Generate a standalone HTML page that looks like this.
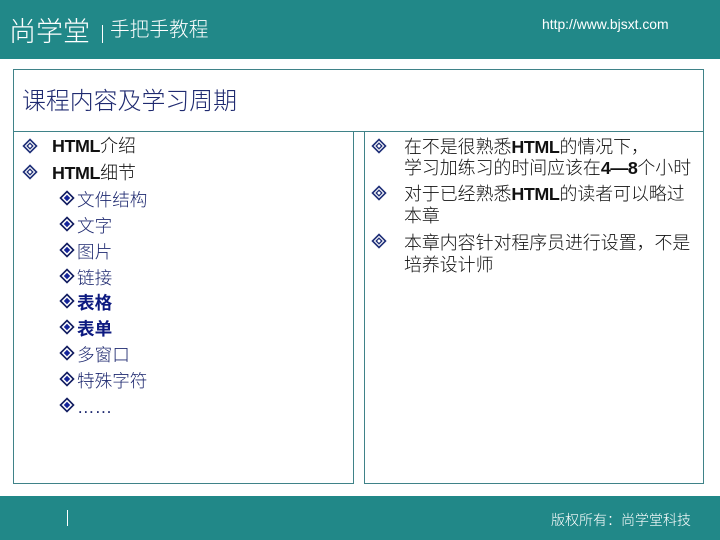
<!DOCTYPE html>
<html lang="zh-CN"><head><meta charset="utf-8">
<style>
html,body{margin:0;padding:0;background:#fff}
#p{position:relative;width:720px;height:540px;overflow:hidden;background:#fff;font-family:"Liberation Sans","Noto Sans CJK SC",sans-serif}
.a{position:absolute;white-space:nowrap;line-height:1}
.box{position:absolute;box-sizing:border-box;border:1px solid #3f8288}
.bar{position:absolute;left:0;width:720px;background:#218888}
.w{color:#fff;font-weight:300}
.l{color:#111;font-size:17.9px;font-weight:300}
.l b{font-weight:700;letter-spacing:-.4px}
.s{color:#1f2a70;font-size:17.6px;left:77px;font-weight:300}
.s.b{color:#0d1a80;font-weight:700}
.d{position:absolute}
</style></head><body><div id="p">
<div class="bar" style="top:0;height:59px"></div>
<div class="bar" style="top:496px;height:44px"></div>
<div class="a w" style="left:9px;top:19px;font-size:27px">尚学堂</div>
<div class="d" style="left:102px;top:25px;width:1px;height:18px;background:#fff"></div>
<div class="a w" style="left:110px;top:21px;font-size:19.7px">手把手教程</div>
<div class="a w" style="left:542px;top:18px;font-size:13.9px">http://www.bjsxt.com</div>
<div class="d" style="left:67px;top:510px;width:1px;height:16px;background:#fff"></div>
<div class="a w" style="left:551px;top:513px;font-size:14px">版权所有：尚学堂科技</div>

<div class="box" style="left:13px;top:69px;width:691px;height:63px"></div>
<div class="box" style="left:13px;top:131px;width:341px;height:353px"></div>
<div class="box" style="left:364px;top:131px;width:340px;height:353px"></div>
<div class="a" style="left:22px;top:90px;font-size:23.9px;color:#1f2a70;font-weight:300">课程内容及学习周期</div>

<svg class="d" style="left:0;top:0" width="720" height="540">
<defs>
<g id="o"><path d="M0-6.5 6.5 0 0 6.5-6.5 0Z" fill="none" stroke="#1f2f78" stroke-width="1.6"/><path d="M0-2.8 2.8 0 0 2.8-2.8 0Z" fill="none" stroke="#1f2f78" stroke-width="1.3"/></g>
<g id="f"><path d="M0-6.5 6.5 0 0 6.5-6.5 0Z" fill="#fff" stroke="#111c60" stroke-width="1.6"/><path d="M0-3.2 3.2 0 0 3.2-3.2 0Z" fill="#14249a"/></g>
</defs>
<use href="#o" x="30" y="146"/><use href="#o" x="30" y="172"/>
<use href="#o" x="379" y="146"/><use href="#o" x="379" y="193"/><use href="#o" x="379" y="241"/>
<use href="#f" x="67" y="198"/><use href="#f" x="67" y="224"/><use href="#f" x="67" y="250"/><use href="#f" x="67" y="276"/><use href="#f" x="67" y="301"/><use href="#f" x="67" y="327"/><use href="#f" x="67" y="353"/><use href="#f" x="67" y="379"/><use href="#f" x="67" y="405"/>
</svg>

<div class="a l" style="left:52px;top:138px"><b>HTML</b>介绍</div>
<div class="a l" style="left:52px;top:165px"><b>HTML</b>细节</div>
<div class="a s" style="top:192px">文件结构</div>
<div class="a s" style="top:218px">文字</div>
<div class="a s" style="top:244px">图片</div>
<div class="a s" style="top:270px">链接</div>
<div class="a s b" style="top:295px">表格</div>
<div class="a s b" style="top:321px">表单</div>
<div class="a s" style="top:347px">多窗口</div>
<div class="a s" style="top:373px">特殊字符</div>
<div class="a s" style="top:399px">……</div>

<div class="a l" style="left:404px;top:139px">在不是很熟悉<b>HTML</b>的情况下，</div>
<div class="a l" style="left:404px;top:160px">学习加练习的时间应该在<b>4—8</b>个小时</div>
<div class="a l" style="left:404px;top:186px">对于已经熟悉<b>HTML</b>的读者可以略过</div>
<div class="a l" style="left:404px;top:208px">本章</div>
<div class="a l" style="left:404px;top:235px">本章内容针对程序员进行设置，不是</div>
<div class="a l" style="left:404px;top:257px">培养设计师</div>
</div></body></html>
